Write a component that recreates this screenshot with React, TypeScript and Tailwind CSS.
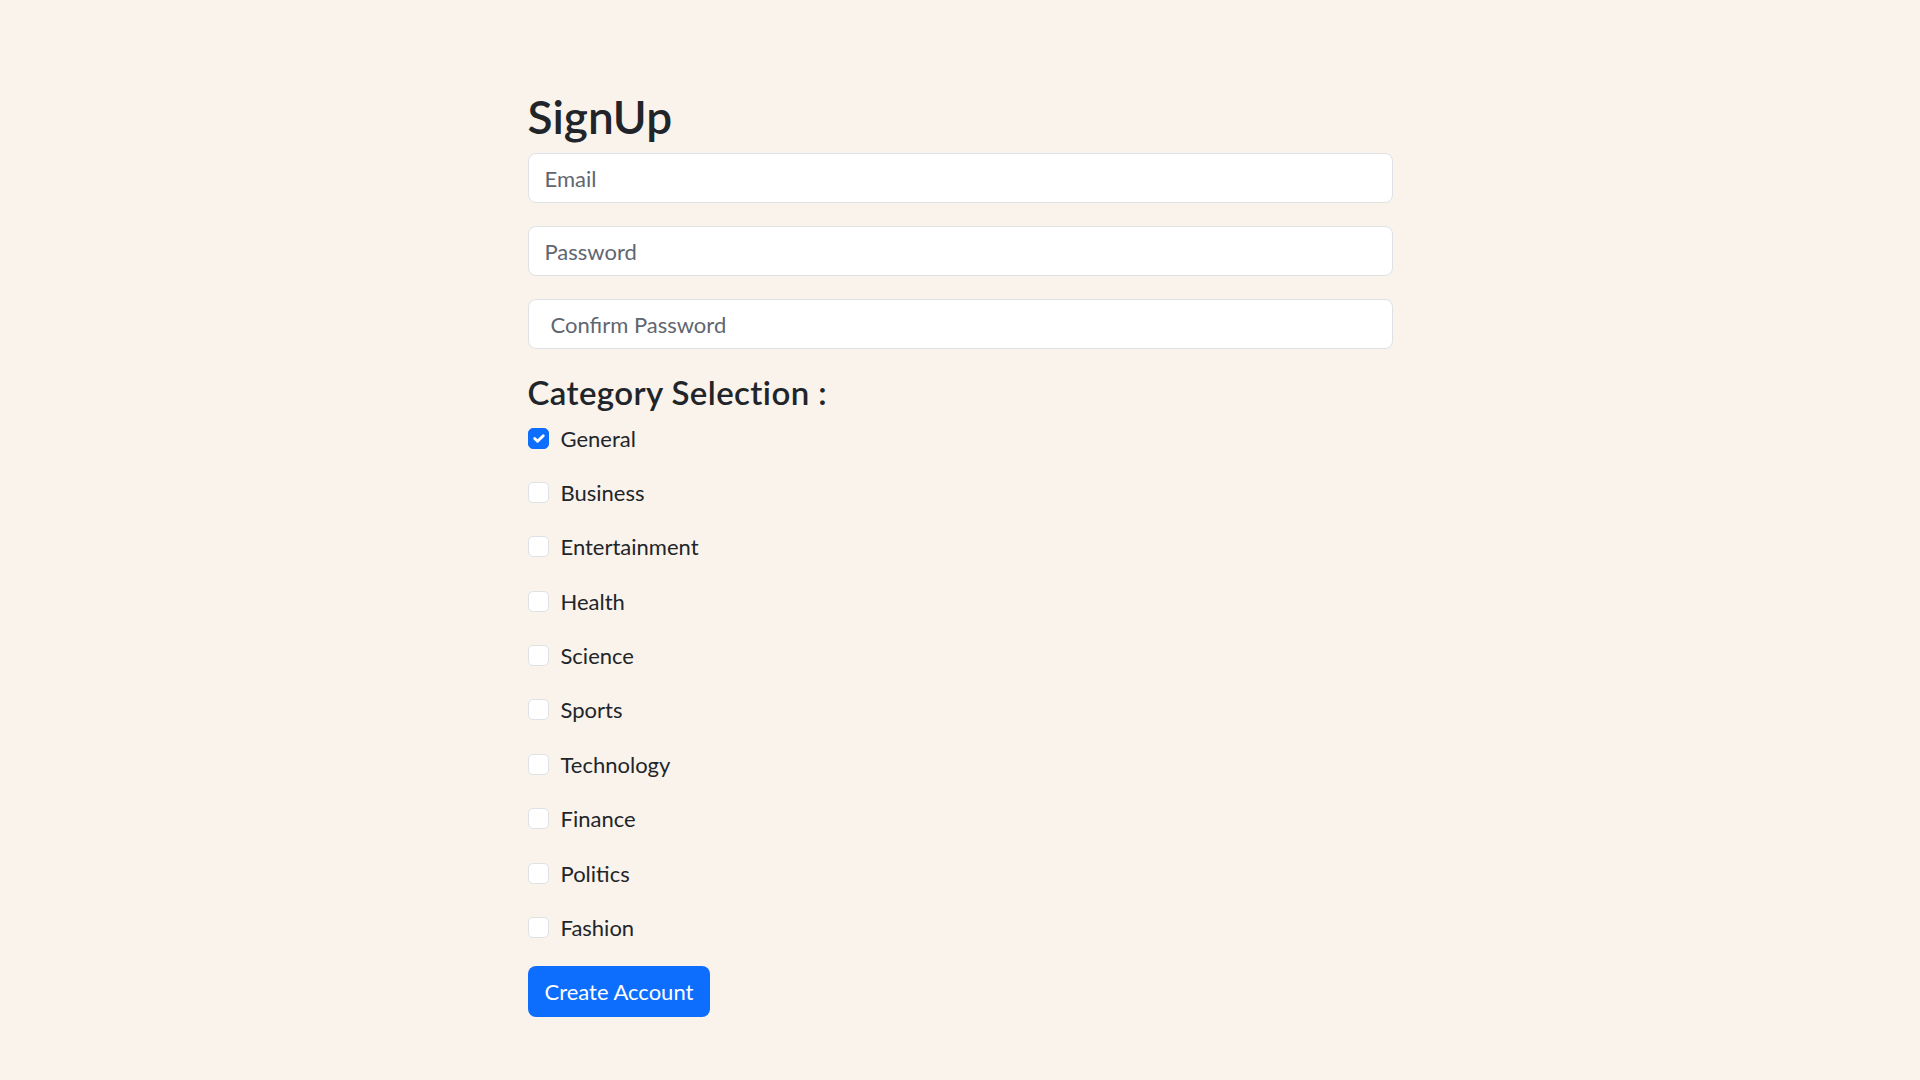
import { useState } from 'react';

const categories = [
  'General',
  'Business',
  'Entertainment',
  'Health',
  'Science',
  'Sports',
  'Technology',
  'Finance',
  'Politics',
  'Fashion',
];

const CheckBox = ({ checked }: { checked: boolean }) => (
  <span
    className={`flex h-[21px] w-[21px] shrink-0 items-center justify-center rounded-[5px] border ${
      checked ? 'border-[#0d6efd] bg-[#0d6efd]' : 'border-[#dee2e6] bg-white'
    }`}
  >
    {checked && (
      <svg viewBox="0 0 20 20" className="h-[19px] w-[19px]">
        <path
          fill="none"
          stroke="#fff"
          strokeLinecap="round"
          strokeLinejoin="round"
          strokeWidth="3"
          d="m6 10 3 3 6-6"
        />
      </svg>
    )}
  </span>
);

const App = () => {
  const [selected, setSelected] = useState<string[]>(['General']);

  const toggle = (name: string) => {
    setSelected((prev) =>
      prev.includes(name) ? prev.filter((c) => c !== name) : [...prev, name]
    );
  };

  return (
    <div className="min-h-screen bg-[#faf3ec] font-['Lato',sans-serif] text-[#212529]">
      <div className="mx-auto w-[865px] pt-[89px] pb-10">
        <h1 className="text-[46px] font-semibold leading-[56px]">SignUp</h1>

        <div className="mt-[8px] flex flex-col gap-[23px]">
          <input
            type="email"
            placeholder="Email"
            className="h-[50px] w-full rounded-lg border border-[#dee2e6] bg-white px-4 text-[22px] outline-none placeholder:text-[#5f6670]"
          />
          <input
            type="password"
            placeholder="Password"
            className="h-[50px] w-full rounded-lg border border-[#dee2e6] bg-white px-4 text-[22px] outline-none placeholder:text-[#5f6670]"
          />
          <input
            type="password"
            placeholder="Confirm Password"
            className="h-[50px] w-full rounded-lg border border-[#dee2e6] bg-white pl-[22px] pr-4 text-[22px] outline-none placeholder:text-[#5f6670]"
          />
        </div>

        <h2 className="mt-[24px] text-[33px] font-semibold leading-[38px] tracking-[0.4px]">
          Category Selection :
        </h2>

        <div className="mt-[11px] flex flex-col gap-[22.4px]">
          {categories.map((name) => (
            <label
              key={name}
              onClick={() => toggle(name)}
              className="flex h-[32px] cursor-pointer items-center gap-[12px] text-[22px]"
            >
              <CheckBox checked={selected.includes(name)} />
              <span>{name}</span>
            </label>
          ))}
        </div>

        <button className="mt-[22px] h-[51px] rounded-lg bg-[#0d6efd] px-[17px] text-[22px] text-white">
          Create Account
        </button>
      </div>
    </div>
  );
};

export default App;
